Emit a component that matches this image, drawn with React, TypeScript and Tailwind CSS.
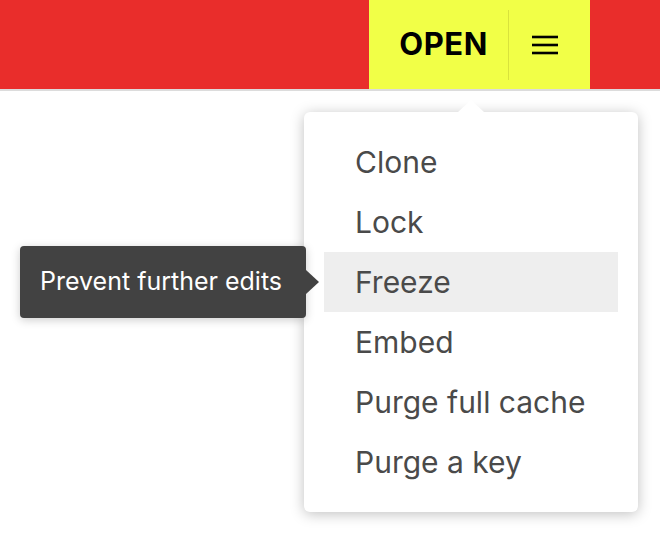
const items = ['Clone', 'Lock', 'Freeze', 'Embed', 'Purge full cache', 'Purge a key'];

export default function App() {
  return (
    <div className="relative h-[538px] w-[660px] overflow-hidden bg-white font-['Inter',sans-serif]">
      <header className="flex h-[91px] justify-end border-b-2 border-[#dcdcdc] bg-[#e92d2b] pr-[70px]">
        <div className="flex h-full items-center bg-[#f1ff47]">
          <button className="pl-[30px] pr-[20px] text-[31px] font-bold tracking-[0.6px] text-black">OPEN</button>
          <div className="h-[70px] w-px bg-[#d8e23c]" />
          <button className="flex h-full items-center pl-[23px] pr-[32px] text-black">
            <svg width="26" height="20" viewBox="0 0 26 20" fill="none" stroke="currentColor" strokeWidth="2.6">
              <line x1="0" y1="2" x2="26" y2="2" />
              <line x1="0" y1="10" x2="26" y2="10" />
              <line x1="0" y1="18" x2="26" y2="18" />
            </svg>
          </button>
        </div>
      </header>

      {/* dropdown */}
      <div className="absolute left-[304px] top-[112px] w-[334px] rounded-[6px] bg-white py-5 shadow-[0_2px_14px_rgba(0,0,0,0.25)]">
        <div className="absolute -top-[12px] left-[154px] h-0 w-0 border-x-[13px] border-b-[12px] border-x-transparent border-b-white" />
        <ul className="px-5">
          {items.map((item) => (
            <li
              key={item}
              className={`flex h-[60px] items-center pl-[31px] text-[30px] text-[#4a4a4a] ${item === 'Freeze' ? 'bg-[#eeeeee]' : ''}`}
            >
              {item}
            </li>
          ))}
        </ul>
      </div>

      {/* tooltip */}
      <div className="absolute left-[20px] top-[246px] flex h-[72px] w-[286px] items-center rounded-[4px] bg-[#424242] pl-[20px] text-[25px] text-white shadow-[0_2px_10px_rgba(0,0,0,0.2)]">
        Prevent further edits
        <div className="absolute -right-[13px] top-[24px] h-0 w-0 border-y-[12px] border-l-[13px] border-y-transparent border-l-[#424242]" />
      </div>
    </div>
  );
}
